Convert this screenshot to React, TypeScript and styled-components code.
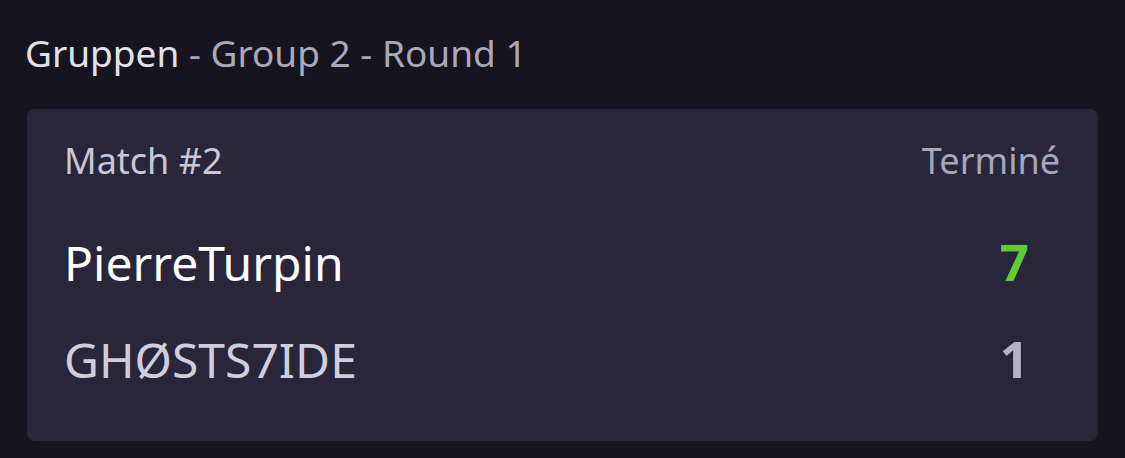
import React from "react";
import styled, { createGlobalStyle } from "styled-components";

type Player = {
  name: string;
  score: number;
  winner: boolean;
};

const GlobalStyle = createGlobalStyle`
  html, body {
    margin: 0;
    padding: 0;
    background-color: #16151f;
  }

  body {
    font-family: "Noto Sans", "Open Sans", sans-serif;
  }
`;

const Page = styled.div`
  width: 1125px;
  height: 458px;
  box-sizing: border-box;
  padding: 33px 27px 0 25px;
  display: flex;
  flex-direction: column;
  gap: 36px;
`;

const Title = styled.h2`
  margin: 0;
  font-size: 37px;
  line-height: 40px;
  font-weight: 400;
  color: #a9a8bc;

  .stage {
    color: #e2e1ea;
  }
`;

const Card = styled.section`
  margin-left: 2px;
  background-color: #29263b;
  border-radius: 8px;
  padding: 32px 38px 34px 37px;
  display: flex;
  flex-direction: column;
  gap: 32px;
`;

const CardHeader = styled.div`
  display: flex;
  justify-content: space-between;
  align-items: baseline;
  font-size: 36px;
  line-height: 40px;
  color: #c9c7d7;

  .status {
    color: #a8a6ba;
  }
`;

const Players = styled.div`
  display: flex;
  flex-direction: column;
`;

const PlayerRow = styled.div<{ $winner: boolean }>`
  display: flex;
  justify-content: space-between;
  align-items: baseline;
  height: 97px;
  line-height: 97px;

  .name {
    font-size: 48px;
    color: ${(p) => (p.$winner ? "#ffffff" : "#cfcedc")};
  }

  .score {
    margin-right: 31px;
    font-size: 51px;
    font-weight: 700;
    color: ${(p) => (p.$winner ? "#5ccb36" : "#b3b2c6")};
  }
`;

const players: Player[] = [
  { name: "PierreTurpin", score: 7, winner: true },
  { name: "GHØSTS7IDE", score: 1, winner: false },
];

function App() {
  return (
    <>
      <GlobalStyle />
      <Page>
        <Title>
          <span className="stage">Gruppen</span> - Group 2 - Round 1
        </Title>
        <Card>
          <CardHeader>
            <span>Match #2</span>
            <span className="status">Terminé</span>
          </CardHeader>
          <Players>
            {players.map((player) => (
              <PlayerRow key={player.name} $winner={player.winner}>
                <span className="name">{player.name}</span>
                <span className="score">{player.score}</span>
              </PlayerRow>
            ))}
          </Players>
        </Card>
      </Page>
    </>
  );
}

export default App;
